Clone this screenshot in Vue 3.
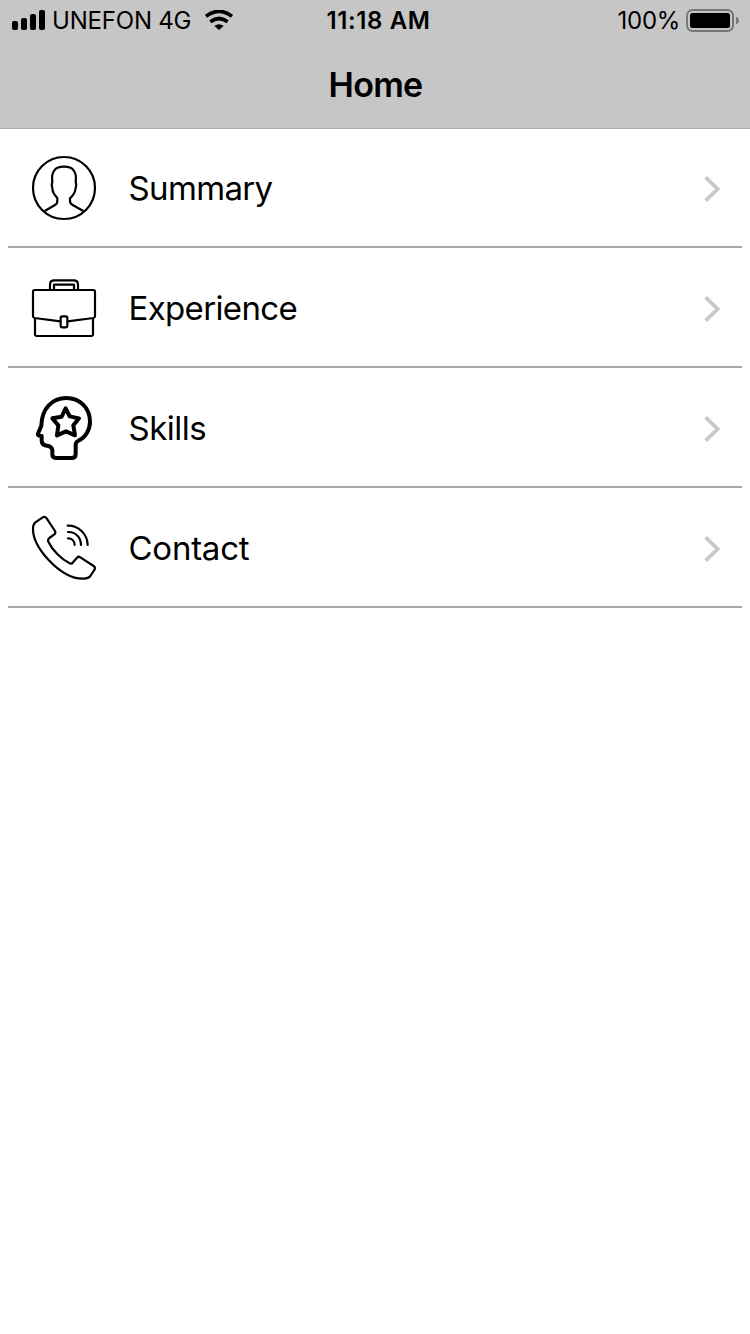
<script setup>
const rows = [
  { label: 'Summary', icon: 'person', tracking: -0.65 },
  { label: 'Experience', icon: 'case', tracking: -0.65 },
  { label: 'Skills', icon: 'head', tracking: -0.5 },
  { label: 'Contact', icon: 'phone', tracking: -0.25 },
]
</script>

<template>
  <div class="screen">
    <header class="top">
      <div class="status">
        <div class="left">
          <svg class="signal" width="34" height="20" viewBox="0 0 34 20">
            <rect x="0" y="11" width="6" height="9" rx="2" />
            <rect x="9" y="8" width="6" height="12" rx="2" />
            <rect x="18" y="4" width="6" height="16" rx="2" />
            <rect x="27" y="0" width="6" height="20" rx="2" />
          </svg>
          <span class="carrier">UNEFON 4G</span>
          <svg class="wifi" width="28" height="20" viewBox="0 0 84 60">
            <path d="M3 19Q42-11 81 19" class="arc" />
            <path d="M16 35Q42 16 68 35" class="arc" />
            <path d="M28 48Q42 37 56 48L42 60Z" />
          </svg>
        </div>
        <div class="time">11:18 AM</div>
        <div class="right">
          <span class="percent">100%</span>
          <svg class="battery" width="54" height="23" viewBox="0 0 54 23">
            <rect x="1" y="1" width="46" height="21" rx="5.5" fill="none" stroke="#777" stroke-width="2" />
            <rect x="4" y="4" width="40" height="15" rx="2.5" />
            <path d="M50 7.5Q53 9 53 11.5T50 15.5Z" fill="#777" />
          </svg>
        </div>
      </div>
      <h1 class="title">Home</h1>
    </header>
    <ul class="list">
      <li v-for="row in rows" :key="row.label" class="row">
        <svg class="icon" :class="row.icon" viewBox="24 24 192 192">
          <template v-if="row.icon === 'person'">
            <circle cx="120" cy="120" r="93" />
            <path d="M62 189L93 171Q100 167 100 158V150C89 139 85 130 85 120Q81 112 85 102C83 88 84 76 91 67Q99 56 120 56Q141 56 149 67C156 76 157 88 155 102Q159 112 155 120C154 132 148 142 138 151V159Q138 167 146 171L178 189" />
          </template>
          <template v-else-if="row.icon === 'case'">
            <path d="M109 160L32 150Q27 149 27 144V71Q27 66 32 66H208Q213 66 213 71V144Q213 149 208 150L131 160" />
            <path d="M33 151V199Q33 204 38 204H202Q207 204 207 199V151" />
            <path d="M78 65V50Q78 37 91 37H149Q162 37 162 50V65M90 65V50H150V65" />
            <rect x="110" y="145" width="20" height="33" rx="5" />
          </template>
          <template v-else-if="row.icon === 'head'">
            <path d="M52 113L42 137Q40 142 46 143L53 144V158Q54 172 68 173Q84 174 85 188V199Q85 210 96 210H143Q155 210 155 198V170Q155 162 162 159C184 149 198 126 198 101C198 59 167 30 127 30C85 30 53 61 52 113Z" />
            <path d="M125 61L137 85L165 91L148 112L153 142L126 130L99 142L103 112L85 91L113 86Z" />
          </template>
          <template v-else>
            <path d="M34 43L56 28Q63 24 68 31L93 69Q96 75 91 79L76 90Q70 95 73 101C85 127 113 154 137 166Q143 169 147 163L159 149Q163 144 169 148L209 174Q216 179 211 186L199 204Q194 211 179 212C147 214 108 193 74 156C44 124 27 91 27 63Q27 49 34 43Z" />
            <path d="M131 53C163 52 190 77 191 111M132 72C154 71 171 88 171 111M132 91C144 91 152 99 152 111" stroke-linecap="round" />
          </template>
        </svg>
        <span class="label" :style="{ letterSpacing: row.tracking + 'px' }">{{ row.label }}</span>
        <svg class="chevron" width="18" height="28" viewBox="0 0 18 28">
          <path d="M2.7 2.3L14.6 14L2.7 25.7" />
        </svg>
      </li>
    </ul>
  </div>
</template>

<style>
body { background: #fff; }
</style>

<style scoped>
.screen {
  width: 750px;
  height: 1334px;
  background: #fff;
  color: #000;
  font-family: Inter, "Liberation Sans", sans-serif;
  overflow: hidden;
}
.top {
  box-sizing: border-box;
  height: 129px;
  background: #c6c6c6;
  border-bottom: 1px solid #acacac;
}
.status {
  height: 40px;
  display: grid;
  grid-template-columns: 1fr auto 1fr;
  align-items: center;
  padding: 0 10px 0 12px;
  font-size: 24px;
  line-height: 38px;
  white-space: nowrap;
}
.left, .right { display: flex; align-items: center; }
.right { justify-content: flex-end; }
.carrier, .time, .percent { padding-top: 2px; }
.carrier { margin-left: 6px; letter-spacing: -0.2px; }
.wifi { margin-left: 14px; }
.arc { fill: none; stroke: #000; stroke-width: 11; }
.time { font-weight: 600; letter-spacing: 0.6px; margin-left: 5px; }
.percent { letter-spacing: -0.3px; }
.battery { margin-left: 6px; }
.title {
  margin: 0;
  height: 88px;
  line-height: 89px;
  text-align: center;
  font-size: 34px;
  font-weight: 600;
  letter-spacing: -0.7px;
  text-indent: 1px;
}
.list { list-style: none; margin: -1px 8px 0; padding: 0; }
.row {
  box-sizing: border-box;
  height: 120px;
  border-bottom: 2px solid #aaa;
  display: flex;
  align-items: center;
  padding: 2px 21px 0 24px;
}
.icon {
  width: 64px;
  height: 64px;
  overflow: visible;
  fill: none;
  stroke: #000;
  stroke-width: 6.6;
  stroke-linejoin: round;
}
.head { stroke-width: 12; }
.label { flex: 1; margin-left: 32.5px; font-size: 33px; line-height: 40px; }
.chevron { fill: none; stroke: #c7c7cc; stroke-width: 3.8; margin-top: 2px; }
</style>
